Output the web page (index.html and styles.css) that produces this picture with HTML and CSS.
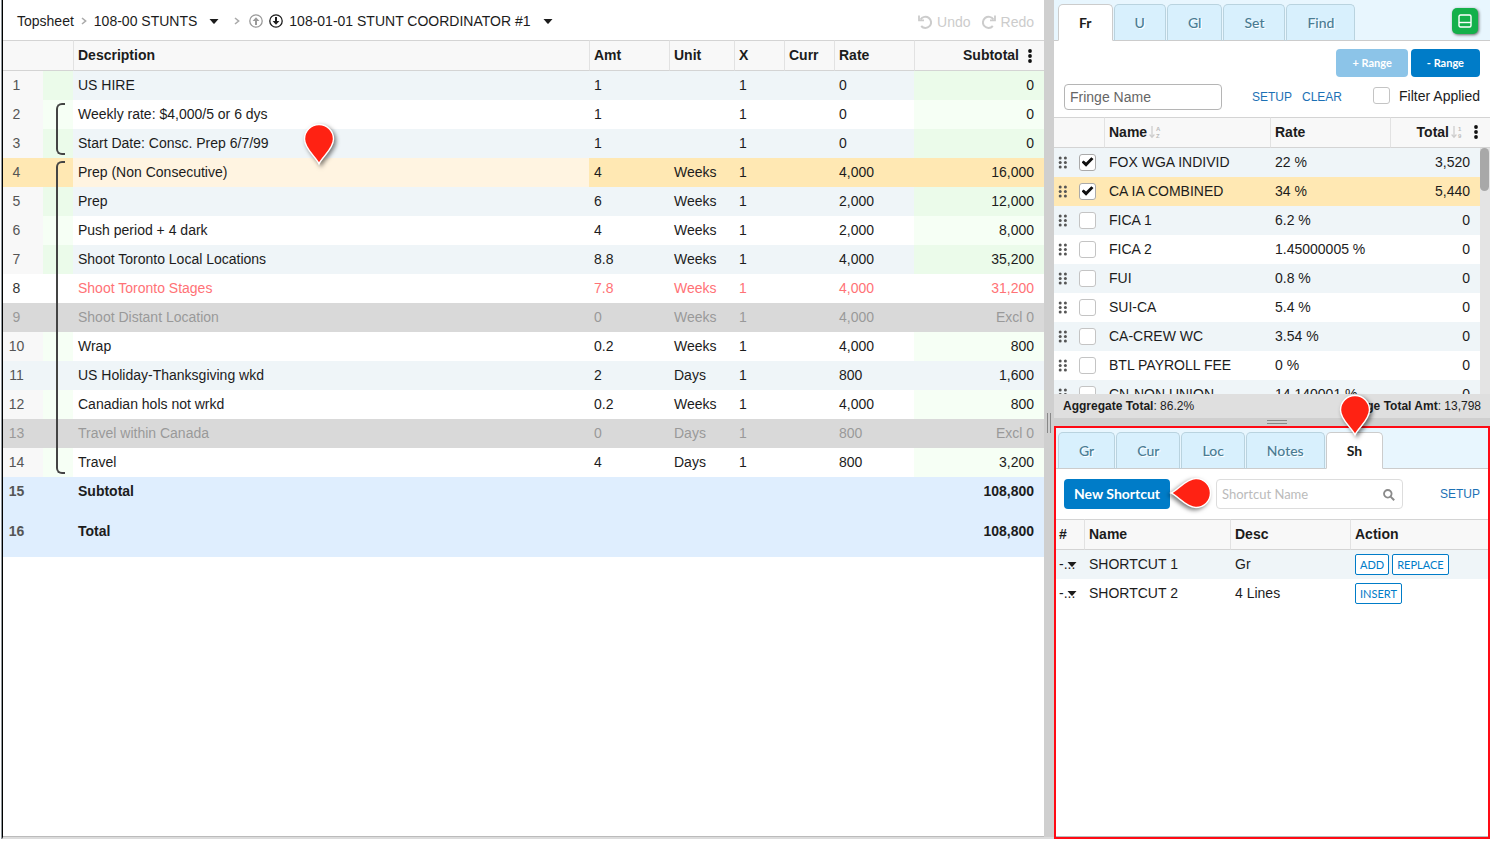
FILE: index.html
```html
<!DOCTYPE html>
<html lang="en">
<head>
<meta charset="utf-8">
<title>108-01-01 Stunt Coordinator #1</title>
<link rel="stylesheet" href="styles.css">
</head>
<body>
<svg class="defs" aria-hidden="true">
  <symbol id="caret" viewBox="0 0 10 5"><path d="M0.5 0h9L5.6 4.4q-.6.6-1.2 0z" fill="currentColor"/></symbol>
  <symbol id="chevron" viewBox="0 0 6 8"><path d="M1 1l3.6 3L1 7" fill="none" stroke="currentColor" stroke-width="1.6"/></symbol>
  <symbol id="circle-arrow" viewBox="0 0 14 14"><circle cx="7" cy="7" r="6.2" fill="none" stroke="currentColor" stroke-width="1.3"/><path d="M7 3v5" stroke="currentColor" stroke-width="2"/><path d="M3.6 7h6.8L7 10.8z" fill="currentColor"/></symbol>
  <symbol id="turn" viewBox="0 0 14 14"><path d="M2.6 4.6A5.6 5.6 0 1 1 3.2 11" fill="none" stroke="currentColor" stroke-width="2"/><path d="M1 0.6V5.4H6" fill="none" stroke="currentColor" stroke-width="1.8"/></symbol>
  <symbol id="grip" viewBox="0 0 10 13"><g fill="#555"><circle cx="2.2" cy="2" r="1.5"/><circle cx="7.4" cy="2" r="1.5"/><circle cx="2.2" cy="6.5" r="1.5"/><circle cx="7.4" cy="6.5" r="1.5"/><circle cx="2.2" cy="11" r="1.5"/><circle cx="7.4" cy="11" r="1.5"/></g></symbol>
  <symbol id="dots" viewBox="0 0 4 14"><g fill="#111"><circle cx="2" cy="2" r="1.9"/><circle cx="2" cy="7" r="1.9"/><circle cx="2" cy="12" r="1.9"/></g></symbol>
  <symbol id="pin" viewBox="0 0 38 48"><path d="M18 42C15 35 3.5 27 3.5 17a14.5 14.5 0 0 1 29 0C32.5 27 21 35 18 42z" fill="#ff2213" stroke="#fff" stroke-width="1.4"/></symbol>
</svg>
<div class="page">
  <main class="budget">
    <header class="topbar">
      <nav class="crumbs" aria-label="Breadcrumb">
        <a href="#">Topsheet</a>
        <svg class="chev"><use href="#chevron"/></svg>
        <a href="#">108-00 STUNTS</a>
        <button class="plain drop" aria-label="Choose account"><svg class="caret"><use href="#caret"/></svg></button>
        <svg class="chev wide"><use href="#chevron"/></svg>
        <span class="steps">
          <button class="plain off" aria-label="Previous account"><svg class="round flip"><use href="#circle-arrow"/></svg></button>
          <button class="plain" aria-label="Next account"><svg class="round"><use href="#circle-arrow"/></svg></button>
        </span>
        <a href="#">108-01-01 STUNT COORDINATOR #1</a>
        <button class="plain drop" aria-label="Choose set"><svg class="caret"><use href="#caret"/></svg></button>
      </nav>
      <div class="history">
        <button class="plain"><svg class="round"><use href="#turn"/></svg>Undo</button>
        <button class="plain"><svg class="round mirror"><use href="#turn"/></svg>Redo</button>
      </div>
    </header>
    <table class="grid lines">
      <colgroup><col class="w40"><col class="w30"><col><col class="w80"><col class="w65"><col class="w50"><col class="w50"><col class="w80"><col class="w130"></colgroup>
      <thead><tr><th colspan="2" aria-label="Row"></th><th>Description</th><th>Amt</th><th>Unit</th><th>X</th><th>Curr</th><th>Rate</th><th><span class="head-end">Subtotal<svg class="dots"><use href="#dots"/></svg></span></th></tr></thead>
      <tbody>
        <tr><td>1</td><td></td><td>US HIRE</td><td>1</td><td></td><td>1</td><td></td><td>0</td><td>0</td></tr>
        <tr><td>2</td><td><span class="bracket start"></span></td><td>Weekly rate: $4,000/5 or 6 dys</td><td>1</td><td></td><td>1</td><td></td><td>0</td><td>0</td></tr>
        <tr><td>3</td><td><span class="bracket end"></span></td><td>Start Date: Consc. Prep 6/7/99</td><td>1</td><td></td><td>1</td><td></td><td>0</td><td>0</td></tr>
        <tr class="selected"><td>4</td><td><span class="bracket start"></span></td><td>Prep (Non Consecutive)</td><td>4</td><td>Weeks</td><td>1</td><td></td><td>4,000</td><td>16,000</td></tr>
        <tr><td>5</td><td><span class="bracket"></span></td><td>Prep</td><td>6</td><td>Weeks</td><td>1</td><td></td><td>2,000</td><td>12,000</td></tr>
        <tr><td>6</td><td><span class="bracket"></span></td><td>Push period + 4 dark</td><td>4</td><td>Weeks</td><td>1</td><td></td><td>2,000</td><td>8,000</td></tr>
        <tr><td>7</td><td><span class="bracket"></span></td><td>Shoot Toronto Local Locations</td><td>8.8</td><td>Weeks</td><td>1</td><td></td><td>4,000</td><td>35,200</td></tr>
        <tr class="flat flagged"><td>8</td><td><span class="bracket"></span></td><td>Shoot Toronto Stages</td><td>7.8</td><td>Weeks</td><td>1</td><td></td><td>4,000</td><td>31,200</td></tr>
        <tr class="flat excluded"><td>9</td><td><span class="bracket"></span></td><td>Shoot Distant Location</td><td>0</td><td>Weeks</td><td>1</td><td></td><td>4,000</td><td>Excl 0</td></tr>
        <tr><td>10</td><td><span class="bracket"></span></td><td>Wrap</td><td>0.2</td><td>Weeks</td><td>1</td><td></td><td>4,000</td><td>800</td></tr>
        <tr class="flat"><td>11</td><td><span class="bracket"></span></td><td>US Holiday-Thanksgiving wkd</td><td>2</td><td>Days</td><td>1</td><td></td><td>800</td><td>1,600</td></tr>
        <tr><td>12</td><td><span class="bracket"></span></td><td>Canadian hols not wrkd</td><td>0.2</td><td>Weeks</td><td>1</td><td></td><td>4,000</td><td>800</td></tr>
        <tr class="flat excluded"><td>13</td><td><span class="bracket"></span></td><td>Travel within Canada</td><td>0</td><td>Days</td><td>1</td><td></td><td>800</td><td>Excl 0</td></tr>
        <tr><td>14</td><td><span class="bracket end"></span></td><td>Travel</td><td>4</td><td>Days</td><td>1</td><td></td><td>800</td><td>3,200</td></tr>
        <tr class="flat sum"><td>15</td><td></td><td colspan="6">Subtotal</td><td>108,800</td></tr>
        <tr class="flat sum"><td>16</td><td></td><td colspan="6">Total</td><td>108,800</td></tr>
      </tbody>
    </table>
    <svg class="pin pin-row" aria-hidden="true"><use href="#pin"/></svg>
  </main>
  <div class="splitter" role="separator"><span class="nub"></span></div>
  <aside class="side">
    <section class="fringes">
      <div class="tabs" role="tablist">
        <button class="tab active" role="tab">Fr</button><button class="tab" role="tab">U</button><button class="tab" role="tab">Gl</button><button class="tab" role="tab">Set</button><button class="tab" role="tab">Find</button>
        <button class="layout" aria-label="Toggle panels"><svg viewBox="0 0 14 14"><rect x="1" y="1" width="12" height="12" rx="1.5" fill="none" stroke="#fff" stroke-width="1.4"/><path d="M1 8.5h12" stroke="#fff" stroke-width="1.4"/></svg></button>
      </div>
      <div class="range-bar"><button class="btn small faded">+ Range</button><button class="btn small">- Range</button></div>
      <div class="filter-bar">
        <input class="field" type="text" placeholder="Fringe Name" aria-label="Fringe Name">
        <a href="#" class="link first">SETUP</a><a href="#" class="link">CLEAR</a>
        <label class="applied"><input type="checkbox" class="check">Filter Applied</label>
      </div>
      <table class="grid head">
        <colgroup><col class="w50"><col><col class="w120"><col class="w100"></colgroup>
        <thead><tr><th aria-label="Applied"></th><th><span class="sortable">Name<svg class="sort" viewBox="0 0 12 14"><path d="M3 1v11M.6 9.5L3 12.3l2.4-2.8" fill="none" stroke="#ccc" stroke-width="1.2"/><text x="7" y="6">A</text><text x="7" y="13">Z</text></svg></span></th><th>Rate</th><th><span class="sortable right">Total<svg class="sort" viewBox="0 0 12 14"><path d="M3 1v11M.6 9.5L3 12.3l2.4-2.8" fill="none" stroke="#ccc" stroke-width="1.2"/><text x="7" y="6">1</text><text x="7" y="13">9</text></svg><svg class="dots"><use href="#dots"/></svg></span></th></tr></thead>
      </table>
      <div class="scroller">
        <table class="grid list">
          <colgroup><col class="w50"><col><col class="w120"><col class="w90"></colgroup>
          <tbody>
            <tr><td><span class="pick"><svg class="grip"><use href="#grip"/></svg><input type="checkbox" class="check" checked aria-label="FOX WGA INDIVID"></span></td><td>FOX WGA INDIVID</td><td>22 %</td><td>3,520</td></tr>
            <tr class="picked"><td><span class="pick"><svg class="grip"><use href="#grip"/></svg><input type="checkbox" class="check" checked aria-label="CA IA COMBINED"></span></td><td>CA IA COMBINED</td><td>34 %</td><td>5,440</td></tr>
            <tr><td><span class="pick"><svg class="grip"><use href="#grip"/></svg><input type="checkbox" class="check" aria-label="FICA 1"></span></td><td>FICA 1</td><td>6.2 %</td><td>0</td></tr>
            <tr><td><span class="pick"><svg class="grip"><use href="#grip"/></svg><input type="checkbox" class="check" aria-label="FICA 2"></span></td><td>FICA 2</td><td>1.45000005 %</td><td>0</td></tr>
            <tr><td><span class="pick"><svg class="grip"><use href="#grip"/></svg><input type="checkbox" class="check" aria-label="FUI"></span></td><td>FUI</td><td>0.8 %</td><td>0</td></tr>
            <tr><td><span class="pick"><svg class="grip"><use href="#grip"/></svg><input type="checkbox" class="check" aria-label="SUI-CA"></span></td><td>SUI-CA</td><td>5.4 %</td><td>0</td></tr>
            <tr><td><span class="pick"><svg class="grip"><use href="#grip"/></svg><input type="checkbox" class="check" aria-label="CA-CREW WC"></span></td><td>CA-CREW WC</td><td>3.54 %</td><td>0</td></tr>
            <tr><td><span class="pick"><svg class="grip"><use href="#grip"/></svg><input type="checkbox" class="check" aria-label="BTL PAYROLL FEE"></span></td><td>BTL PAYROLL FEE</td><td>0 %</td><td>0</td></tr>
            <tr><td><span class="pick"><svg class="grip"><use href="#grip"/></svg><input type="checkbox" class="check" aria-label="CN-NON UNION"></span></td><td>CN-NON UNION</td><td>14.140001 %</td><td>0</td></tr>
          </tbody>
        </table>
        <div class="track"><div class="thumb"></div></div>
      </div>
      <footer class="totals"><span><b>Aggregate Total</b>: 86.2%</span><span><b>Fringe Total Amt</b>: 13,798</span></footer>
    </section>
    <div class="splitter across" role="separator"><span class="nub"></span></div>
    <section class="shortcuts">
      <div class="tabs" role="tablist">
        <button class="tab" role="tab">Gr</button><button class="tab" role="tab">Cur</button><button class="tab" role="tab">Loc</button><button class="tab" role="tab">Notes</button><button class="tab active" role="tab">Sh</button>
      </div>
      <div class="shortcut-bar">
        <button class="btn">New Shortcut</button>
        <div class="search"><input type="search" placeholder="Shortcut Name" aria-label="Shortcut Name"><svg viewBox="0 0 12 12"><circle cx="4.8" cy="4.8" r="3.8" fill="none" stroke="#8a8a8a" stroke-width="1.8"/><path d="M7.6 7.6l3.6 3.6" stroke="#8a8a8a" stroke-width="2"/></svg></div>
        <a href="#" class="link">SETUP</a>
      </div>
      <table class="grid actions">
        <colgroup><col class="w28"><col class="w146"><col class="w120"><col></colgroup>
        <thead><tr><th>#</th><th>Name</th><th>Desc</th><th>Action</th></tr></thead>
        <tbody>
          <tr><td><button class="plain order" aria-label="Order of shortcut 1">-...<svg class="caret"><use href="#caret"/></svg></button></td><td>SHORTCUT 1</td><td>Gr</td><td><span class="acts"><button class="act">ADD</button><button class="act">REPLACE</button></span></td></tr>
          <tr><td><button class="plain order" aria-label="Order of shortcut 2">-...<svg class="caret"><use href="#caret"/></svg></button></td><td>SHORTCUT 2</td><td>4 Lines</td><td><span class="acts"><button class="act">INSERT</button></span></td></tr>
        </tbody>
      </table>
      <svg class="pin pin-tab" aria-hidden="true"><use href="#pin"/></svg>
      <svg class="pin pin-new" aria-hidden="true"><use href="#pin"/></svg>
    </section>
  </aside>
</div>
</body>
</html>
```
FILE: styles.css
```css
* { box-sizing: border-box; }
body { margin: 0; background: #fff; color: #1c1c1c; font: 14px/28px "Liberation Sans", Arial, sans-serif; }
.defs { position: absolute; width: 0; height: 0; }
button, input { font: inherit; color: inherit; margin: 0; }
a { color: inherit; text-decoration: none; }
svg { display: block; flex: none; }
.page { display: flex; height: 100vh; padding: 0 3px 4px 0; }
.budget { position: relative; flex: 1; min-width: 0; border-left: 1px solid #000; margin-left: 2px; border-bottom: 2px solid #dcdcdc; box-shadow: -1px 0 #8f979c, inset 0 -1px #bbb; }

.topbar { display: flex; justify-content: space-between; height: 40px; padding: 2px 10px 0 14px; }
.crumbs, .history, .history button { display: flex; align-items: center; }
.plain { border: 0; padding: 0; background: none; display: flex; cursor: pointer; }
.caret { width: 10px; height: 5px; }
.chev { width: 6px; height: 8px; margin: 0 7px; color: #aaa; }
.chev.wide { margin: 0 9px 0 15px; }
.drop { margin-left: 12px; }
.round { width: 14px; height: 14px; }
.steps { display: flex; gap: 6px; margin-right: 6px; }
.off { color: #999; }
.flip { transform: rotate(180deg); }
.mirror { transform: scaleX(-1); }
.history { gap: 11px; padding-top: 2px; color: #ccc; }
.history button { gap: 5px; }

.grid { width: 100%; table-layout: fixed; border-collapse: separate; border-spacing: 0; }
.w28 { width: 28px; } .w30 { width: 30px; } .w40 { width: 40px; } .w50 { width: 50px; } .w65 { width: 65px; } .w80 { width: 80px; }
.w90 { width: 90px; } .w100 { width: 100px; } .w120 { width: 120px; } .w130 { width: 130px; } .w146 { width: 146px; }
th { height: 31px; padding: 0 5px; text-align: left; font-weight: bold; line-height: 29px; background: #f8f8f8; border: solid #d4d4d4; border-width: 1px 0; }
th + th { border-left: 1px solid #e2e2e2; padding-left: 4px; }
td { position: relative; height: 29px; padding: 0 5px 1px; line-height: 28px; white-space: nowrap; }
tbody tr { background: #fff; }
tbody tr:nth-child(odd) { background: #eff5f8; }
.head-end, .sortable { display: flex; align-items: center; justify-content: flex-end; gap: 9px; }
.head-end { padding-right: 7px; }
.dots { width: 4px; height: 14px; }

.lines td:first-child { padding-left: 0; padding-right: 13px; text-align: center; color: #555; background: #f8f8f8; }
.lines td:last-child { text-align: right; padding-right: 10px; }
.lines td:nth-child(2), .lines td:last-child { background: #f6fff5; }
.lines tr:nth-child(odd) td:nth-child(2), .lines tr:nth-child(odd) td:last-child { background: #ebfbea; }
.lines tbody .flat:nth-child(n) td:nth-child(n) { background: transparent; }
.lines tbody .selected td:nth-child(n) { background: #ffe8b3; }
.lines tbody .selected td:nth-child(3) { background: #fff4e1; }
.lines .flagged { color: #ff7276; }
.lines .flagged td:first-child { color: #333; }
.lines .excluded:nth-child(n) { background: #d9d9d9; }
.lines .excluded td:nth-child(n) { color: #999; }
.lines .sum:nth-child(n) { background: #dfeefe; font-weight: bold; }
.lines .sum td { height: 40px; padding-bottom: 12px; }
.bracket { position: absolute; inset: 0 auto 0 13px; width: 9px; border: 0 solid #444; border-left-width: 2px; }
.start { top: 3px; border-top-width: 2px; border-top-left-radius: 6px; }
.end { bottom: 3px; border-bottom-width: 2px; border-bottom-left-radius: 6px; }

.splitter { flex: 0 0 10px; display: flex; align-items: center; justify-content: center; padding-top: 8px; background: #cfcfcf; border-bottom: 2px solid #dcdcdc; }
.nub { width: 4px; height: 20px; border: solid #888; border-width: 0 1px; }
.across { flex-basis: 8px; padding: 0 0 0 10px; border: 0; }
.across .nub { width: 20px; height: 4px; border-width: 1px 0; }

.side { flex: 0 0 436px; display: flex; flex-direction: column; }
.fringes { flex: 0 0 418px; min-height: 0; display: flex; flex-direction: column; }
.tabs { position: relative; display: flex; gap: 1px; height: 41px; padding: 4px 4px 0; background: #e8f6fe; border-bottom: 1px solid #ccc; font: 14px/34px Lato, sans-serif; }
.tab { height: 37px; margin-bottom: -1px; padding: 0 20px; border: 1px solid #b9d3df; border-bottom-color: #ccc; border-radius: 5px 5px 0 0; background: #d8f0fd; color: #4a7c94; font-weight: 500; text-shadow: 1px 1px #fff; cursor: pointer; }
.tab.active { background: #fff; border-color: #ccc; border-bottom-color: #fff; color: #1c1c1c; font-weight: bold; }
.layout { display: flex; align-items: center; justify-content: center; width: 26px; height: 26px; margin: 4px 8px 0 auto; border: 0; border-radius: 5px; background: #13b04a; box-shadow: 1px 1px 3px #666; }
.layout svg { width: 14px; height: 14px; }
.btn { height: 30px; padding: 0 10px; border: 0; border-radius: 4px; background: #007cc8; color: #fff; font: bold 14px/30px Lato, sans-serif; cursor: pointer; }
.small { height: 28px; padding: 0 16px; font-size: 11px; line-height: 28px; }
.faded { background: #8cc4e8; }
.range-bar { display: flex; justify-content: flex-end; gap: 3px; padding: 8px 10px 0; }
.filter-bar { display: flex; align-items: center; height: 40px; padding: 0 10px; }
.field { width: 158px; height: 26px; padding: 0 5px; border: 1px solid #b5b5b5; border-radius: 4px; line-height: 24px; }
.field::placeholder { color: #666; opacity: 1; }
.link { font-size: 12px; color: #1c71b5; margin-left: 10px; }
.link.first { margin-left: 30px; }
.applied { display: flex; align-items: center; gap: 9px; margin-left: auto; margin-bottom: 3px; }
.check { appearance: none; width: 17px; height: 17px; border: 1px solid #c4c4c4; border-radius: 3px; background: #fff; display: grid; place-items: center; }
.check:checked { border-color: #aaa; }
.check:checked::before { content: ""; width: 12px; height: 10px; background: #111; clip-path: polygon(0 52%, 18% 34%, 38% 56%, 82% 2%, 100% 20%, 38% 98%); }
.sortable { justify-content: flex-start; gap: 2px; }
.sortable.right { justify-content: flex-end; padding-right: 7px; }
.sortable .dots { margin-left: 9px; }
.sort { width: 12px; height: 14px; }
.sort text { font: bold 6px "Liberation Sans", sans-serif; fill: #bbb; }
.fringes th { line-height: 28px; padding-bottom: 1px; }
.scroller { flex: 1; min-height: 0; display: flex; overflow: hidden; }
.list { flex: 1; align-self: flex-start; }
.list td:last-child { text-align: right; padding-right: 10px; }
.list .picked { background: #ffe8b3; }
.pick { display: flex; align-items: center; justify-content: space-between; }
.list td:first-child { padding-left: 4px; padding-right: 8px; }
.grip { width: 10px; height: 13px; }
.track { flex: 0 0 10px; background: #e4e4e4; }
.thumb { width: 9px; height: 43px; border-radius: 5px; background: #a8a8a8; }
.totals { display: flex; justify-content: space-between; height: 24px; padding: 0 9px; background: #dfdfdf; font-size: 12px; line-height: 24px; }

.shortcuts { position: relative; flex: 1; border: 2px solid #ff0a14; box-shadow: inset 0 -1px #bbb; }
.shortcuts .tabs { padding-left: 2px; }
.shortcut-bar { display: flex; align-items: center; height: 50px; padding: 0 8px; }
.shortcut-bar .link { margin-left: auto; }
.search { position: relative; width: 187px; margin-left: 46px; }
.search input { display: block; width: 100%; height: 30px; padding: 0 5px; border: 1px solid #ddd; border-radius: 4px; font: 13px/28px Lato, sans-serif; }
.search input::placeholder { color: #bbb; opacity: 1; }
.search svg { position: absolute; right: 8px; top: 10px; width: 12px; height: 12px; }
.actions th:first-child, .actions td:first-child { padding-left: 3px; padding-right: 3px; }
.order { position: relative; width: 18px; line-height: 28px; }
.order .caret { position: absolute; right: 0; top: 12px; }
.acts { display: flex; gap: 3px; }
.act { height: 21px; padding: 0 4px; border: 1px solid #007cc8; border-radius: 2px; background: #fff; color: #007cc8; font: 11px/19px Lato, sans-serif; cursor: pointer; }

.pin { position: absolute; width: 38px; height: 48px; overflow: visible; filter: drop-shadow(2px 2px 2px rgba(0, 0, 0, .5)); }
.pin-row { left: 298px; top: 122px; }
.pin-tab { left: 281px; top: -35px; }
.pin-new { left: 115px; top: 41px; transform-origin: 18px 24px; transform: rotate(90deg); }
```
